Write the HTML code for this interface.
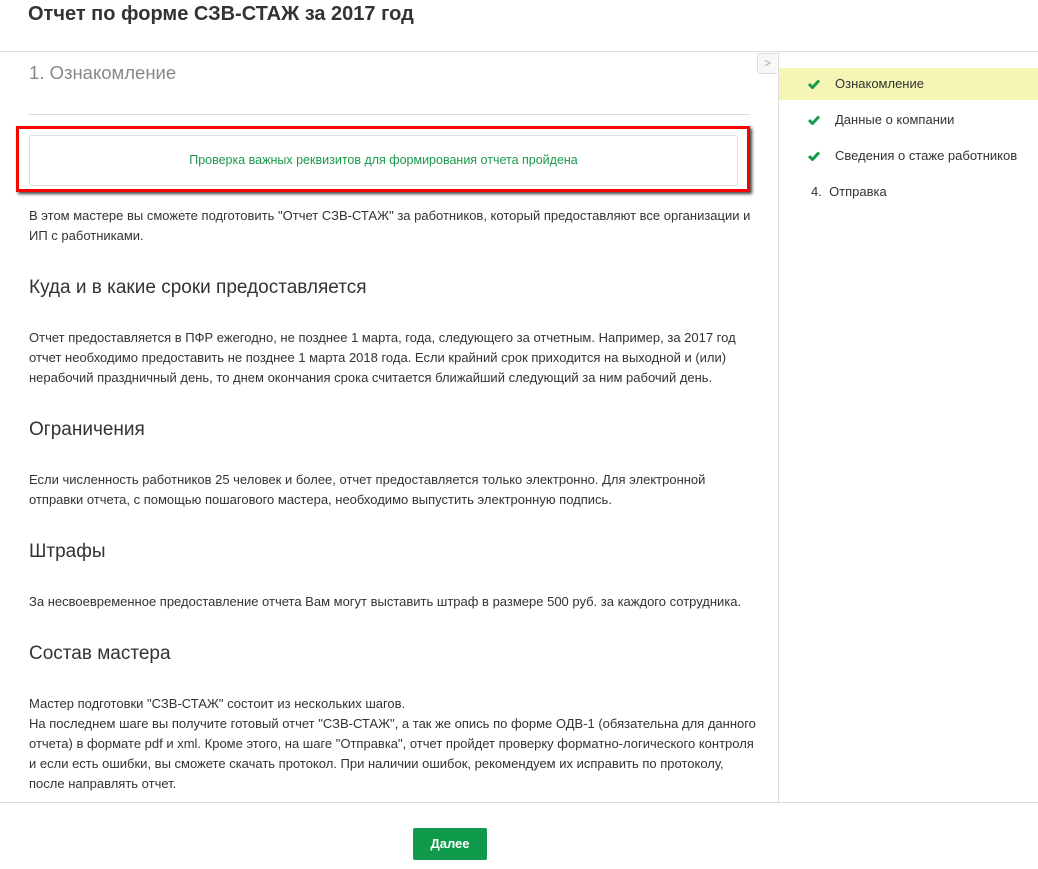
<!DOCTYPE html><html><head><meta charset="utf-8"><style>
body{margin:0;width:1038px;height:869px;background:#fff;font-family:"Liberation Sans",Arial,sans-serif;color:#333;position:relative;overflow:hidden}
.a{position:absolute}
p{margin:0}
.t{font-size:13px;line-height:20px;color:#333;left:29px;width:730px;position:absolute}
h2{position:absolute;left:29px;margin:0;font-size:19px;font-weight:normal;color:#333}
.s{position:absolute;left:835px;font-size:13px;color:#333}
.c{position:absolute;left:808px;width:12px;height:10px}
</style></head><body>
<div class="a" style="left:28px;top:3px;font-size:20px;font-weight:bold;color:#333">Отчет по форме СЗВ-СТАЖ за 2017 год</div>
<div class="a" style="left:0;top:51px;width:1038px;height:1px;background:#ddd"></div>
<div class="a" style="left:778px;top:52px;width:1px;height:750px;background:#ddd"></div>
<div class="a" style="left:0;top:802px;width:1038px;height:1px;background:#ddd"></div>
<div class="a" style="left:757px;top:53px;width:19px;height:19px;border:1px solid #ddd;border-right:none;border-radius:3px 0 0 3px;background:#f7f7f7;color:#aaa;font-size:12px;text-align:center;line-height:19px">&gt;</div>
<div class="a" style="left:29px;top:62px;font-size:18.5px;color:#888">1. Ознакомление</div>
<div class="a" style="left:28px;top:114px;width:722px;height:1px;background:#ddd"></div>
<div class="a" style="left:16px;top:126px;width:728px;height:60px;border:3px solid #f00;box-shadow:2px 2px 3px #444"></div>
<div class="a" style="left:29px;top:135px;width:707px;height:49px;border:1px solid #ddd;border-radius:3px;text-align:center;line-height:49px;font-size:12.5px;color:#1a9a4a">Проверка важных реквизитов для формирования отчета пройдена</div>
<p class="t" style="top:206px">В этом мастере вы сможете подготовить "Отчет СЗВ-СТАЖ" за работников, который предоставляют все организации и ИП с работниками.</p>
<h2 style="top:277px">Куда и в какие сроки предоставляется</h2>
<p class="t" style="top:328px">Отчет предоставляется в ПФР ежегодно, не позднее 1 марта, года, следующего за отчетным. Например, за 2017 год отчет необходимо предоставить не позднее 1 марта 2018 года. Если крайний срок приходится на выходной и (или) нерабочий праздничный день, то днем окончания срока считается ближайший следующий за ним рабочий день.</p>
<h2 style="top:419px">Ограничения</h2>
<p class="t" style="top:470px">Если численность работников 25 человек и более, отчет предоставляется только электронно. Для электронной отправки отчета, с помощью пошагового мастера, необходимо выпустить электронную подпись.</p>
<h2 style="top:541px">Штрафы</h2>
<p class="t" style="top:592px">За несвоевременное предоставление отчета Вам могут выставить штраф в размере 500 руб. за каждого сотрудника.</p>
<h2 style="top:643px">Состав мастера</h2>
<p class="t" style="top:694px">Мастер подготовки "СЗВ-СТАЖ" состоит из нескольких шагов.<br>На последнем шаге вы получите готовый отчет "СЗВ-СТАЖ", а так же опись по форме ОДВ-1 (обязательна для данного отчета) в формате pdf и xml. Кроме этого, на шаге "Отправка", отчет пройдет проверку форматно-логического контроля и если есть ошибки, вы сможете скачать протокол. При наличии ошибок, рекомендуем их исправить по протоколу, после направлять отчет.</p>
<div class="a" style="left:779px;top:68px;width:259px;height:32px;background:#f5f5b5"></div>
<svg class="c" style="top:79px" viewBox="0 0 12 10"><path d="M1 5l3.5 3.5L11 1.5" stroke="#1a9a4a" stroke-width="3" fill="none"/></svg>
<svg class="c" style="top:115px" viewBox="0 0 12 10"><path d="M1 5l3.5 3.5L11 1.5" stroke="#1a9a4a" stroke-width="3" fill="none"/></svg>
<svg class="c" style="top:151px" viewBox="0 0 12 10"><path d="M1 5l3.5 3.5L11 1.5" stroke="#1a9a4a" stroke-width="3" fill="none"/></svg>
<div class="s" style="top:76px">Ознакомление</div>
<div class="s" style="top:112px">Данные о компании</div>
<div class="s" style="top:148px">Сведения о стаже работников</div>
<div class="s" style="top:184px;left:811px">4.&nbsp;&nbsp;Отправка</div>
<div class="a" style="left:413px;top:828px;width:74px;height:32px;background:#0e9a4a;border-radius:2px;color:#fff;font-weight:bold;font-size:13px;text-align:center;line-height:32px">Далее</div>
</body></html>
